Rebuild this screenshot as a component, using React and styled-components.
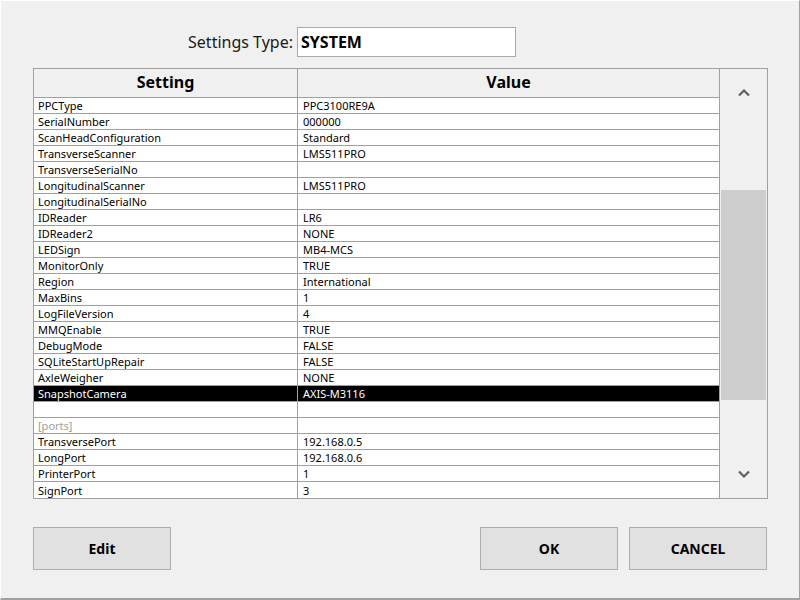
import styled, { createGlobalStyle } from 'styled-components';

const GlobalStyle = createGlobalStyle`
  html, body {
    margin: 0;
    padding: 0;
    background: #f0f0f0;
  }
  * {
    box-sizing: border-box;
  }
`;

const Window = styled.div`
  width: 800px;
  height: 600px;
  background: #f0f0f0;
  border-top: 1px solid #ffffff;
  border-left: 1px solid #ffffff;
  border-right: 1px solid #a0a0a0;
  border-bottom: 2px solid #a0a0a0;
  font-family: "Noto Sans", "Open Sans", sans-serif;
  color: #000;
  padding: 26px 32px 0 32px;
  display: flex;
  flex-direction: column;
`;

const TypeRow = styled.div`
  display: grid;
  grid-template-columns: 264px 219px;
  align-items: center;
`;

const TypeLabel = styled.label`
  text-align: right;
  padding-right: 4px;
  font-size: 16px;
  color: #1a1a1a;
`;

const TypeInput = styled.div`
  height: 30px;
  border: 1px solid #a9a9a9;
  background: #fff;
  padding-left: 3px;
  font-size: 16px;
  font-weight: 700;
  display: flex;
  align-items: center;
`;

const Frame = styled.div`
  margin-top: 11px;
  width: 735px;
  border: 1px solid #a0a0a0;
  display: flex;
`;

const Grid = styled.div`
  width: 686px;
  display: flex;
  flex-direction: column;
`;

const Row = styled.div`
  display: grid;
  grid-template-columns: 264px 422px;
  height: ${p => (p.$header ? '29px' : '16px')};
  border-bottom: ${p => (p.$last ? 'none' : '1px solid #a0a0a0')};
  background: ${p => (p.$header ? '#f0f0f0' : p.$selected ? '#000' : '#fff')};
  color: ${p => (p.$selected ? '#fff' : p.$muted ? '#a0a0a0' : '#000')};
`;

const Cell = styled.div`
  border-right: 1px solid #a0a0a0;
  font-size: ${p => (p.$header ? '16px' : '11px')};
  font-weight: ${p => (p.$header ? 700 : 400)};
  padding-left: ${p => (p.$header ? 0 : p.$value ? '5px' : '4px')};
  padding-bottom: ${p => (p.$header ? '2px' : '0')};
  display: flex;
  align-items: center;
  justify-content: ${p => (p.$header ? 'center' : 'flex-start')};
  white-space: nowrap;
  overflow: hidden;
  line-height: 1;
`;

const ScrollBar = styled.div`
  flex: 1;
  background: #f0f0f0;
  display: flex;
  flex-direction: column;
`;

const ArrowButton = styled.div`
  height: 48px;
  display: flex;
  align-items: center;
  justify-content: center;
  color: #606060;
`;

const Track = styled.div`
  flex: 1;
  display: flex;
  flex-direction: column;
  padding: 0 1px;
`;

const Thumb = styled.div`
  background: #cdcdcd;
`;

const Buttons = styled.div`
  margin-top: 28px;
  width: 734px;
  display: flex;
  gap: 11px;
`;

const Button = styled.button`
  width: 138px;
  height: 43px;
  background: #e1e1e1;
  border: 1px solid #adadad;
  font-family: "Noto Sans", "Open Sans", sans-serif;
  font-size: 14px;
  font-weight: 700;
  color: #000;
  padding: 0;
  margin-left: ${p => (p.$push ? 'auto' : '0')};
`;

const rows = [
  ['PPCType', 'PPC3100RE9A'],
  ['SerialNumber', '000000'],
  ['ScanHeadConfiguration', 'Standard'],
  ['TransverseScanner', 'LMS511PRO'],
  ['TransverseSerialNo', ''],
  ['LongitudinalScanner', 'LMS511PRO'],
  ['LongitudinalSerialNo', ''],
  ['IDReader', 'LR6'],
  ['IDReader2', 'NONE'],
  ['LEDSign', 'MB4-MCS'],
  ['MonitorOnly', 'TRUE'],
  ['Region', 'International'],
  ['MaxBins', '1'],
  ['LogFileVersion', '4'],
  ['MMQEnable', 'TRUE'],
  ['DebugMode', 'FALSE'],
  ['SQLiteStartUpRepair', 'FALSE'],
  ['AxleWeigher', 'NONE'],
  ['SnapshotCamera', 'AXIS-M3116'],
  ['', ''],
  ['[ports]', ''],
  ['TransversePort', '192.168.0.5'],
  ['LongPort', '192.168.0.6'],
  ['PrinterPort', '1'],
  ['SignPort', '3'],
];

const selectedIndex = 18;
// thumb position in px within the track
const thumbTop = 73;
const thumbHeight = 210;

const Chevron = ({ down }) => (
  <svg width="12" height="8" viewBox="0 0 12 8">
    <path
      d={down ? 'M1 1.5 L6 6.5 L11 1.5' : 'M1 6.5 L6 1.5 L11 6.5'}
      fill="none"
      stroke="currentColor"
      strokeWidth="2.2"
    />
  </svg>
);

const App = () => {
  return (
    <Window>
      <GlobalStyle />
      <TypeRow>
        <TypeLabel>Settings Type:</TypeLabel>
        <TypeInput>SYSTEM</TypeInput>
      </TypeRow>

      <Frame>
        <Grid>
          <Row $header>
            <Cell $header>Setting</Cell>
            <Cell $header>Value</Cell>
          </Row>
          {rows.map(([name, value], i) => (
            <Row
              key={i}
              $selected={i === selectedIndex}
              $muted={name.startsWith('[')}
              $last={i === rows.length - 1}
            >
              <Cell>{name}</Cell>
              <Cell $value>{value}</Cell>
            </Row>
          ))}
        </Grid>
        <ScrollBar>
          <ArrowButton>
            <Chevron />
          </ArrowButton>
          <Track>
            <Thumb style={{ marginTop: thumbTop, height: thumbHeight }} />
          </Track>
          <ArrowButton>
            <Chevron down />
          </ArrowButton>
        </ScrollBar>
      </Frame>

      <Buttons>
        <Button>Edit</Button>
        <Button $push>OK</Button>
        <Button>CANCEL</Button>
      </Buttons>
    </Window>
  );
};

export default App;
